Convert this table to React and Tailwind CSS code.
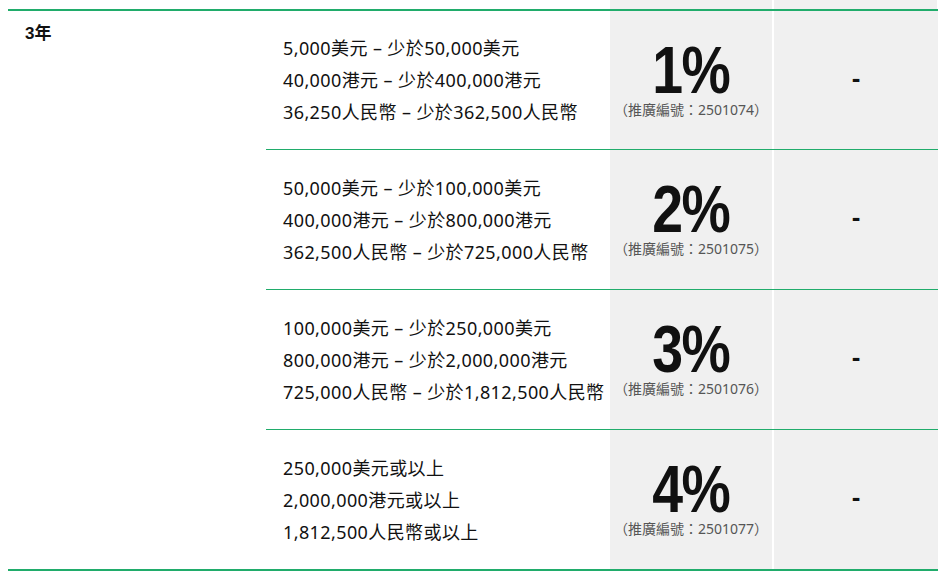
const ROWS = [
  {
    lines: ['5,000美元 – 少於50,000美元', '40,000港元 – 少於400,000港元', '36,250人民幣 – 少於362,500人民幣'],
    rate: '1%',
    code: '2501074',
    h: 'h-[139px]',
  },
  {
    lines: ['50,000美元 – 少於100,000美元', '400,000港元 – 少於800,000港元', '362,500人民幣 – 少於725,000人民幣'],
    rate: '2%',
    code: '2501075',
    h: 'h-[140px]',
  },
  {
    lines: ['100,000美元 – 少於250,000美元', '800,000港元 – 少於2,000,000港元', '725,000人民幣 – 少於1,812,500人民幣'],
    rate: '3%',
    code: '2501076',
    h: 'h-[140px]',
  },
  {
    lines: ['250,000美元或以上', '2,000,000港元或以上', '1,812,500人民幣或以上'],
    rate: '4%',
    code: '2501077',
    h: 'h-[139px]',
  },
];

const FONT = "font-['Noto_Sans','Noto_Sans_CJK_TC',sans-serif]";

export default function App() {
  return (
    <div className={`w-[946px] h-[576px] bg-white px-2 text-[#111] ${FONT}`}>
      {/* tail of the previous row */}
      <div className="flex h-[9px]">
        <div className="w-[602px]" />
        <div className="w-[162px] bg-[#f0f0f0]" />
        <div className="w-[2px]" />
        <div className="w-[163px] bg-[#f0f0f0]" />
      </div>

      <div className="flex w-[930px] border-y-2 border-[#20ac6b]">
        <div className="w-[258px] shrink-0 pl-[17px] pt-[11px] text-[17px] font-bold leading-6 font-['Liberation_Sans','Noto_Sans_CJK_TC',sans-serif]">
          3年
        </div>
        <div className="flex flex-1 flex-col">
          {ROWS.map((r, i) => (
            <div
              key={r.code}
              className={`flex ${r.h} ${i < ROWS.length - 1 ? 'border-b border-[#20ac6b]' : ''}`}
            >
              <div className="flex w-[344px] flex-col justify-center pl-[17px] text-[18px] leading-8 tracking-[0.4px]">
                {r.lines.map((l) => (
                  <p key={l}>{l}</p>
                ))}
              </div>
              <div className="flex w-[162px] flex-col items-center justify-center bg-[#f0f0f0] pb-[3px]">
                <span className="scale-x-[0.84] text-[66px] font-bold leading-[60px] tracking-[-2px] font-['Liberation_Sans',sans-serif]">
                  {r.rate}
                </span>
                <span className="mt-[2px] text-[14px] leading-4 text-[#555]">（推廣編號：{r.code}）</span>
              </div>
              <div className="w-[2px]" />
              <div className="flex w-[164px] items-center justify-center bg-[#f0f0f0] pb-[4px] text-[26px] font-bold font-['Liberation_Sans',sans-serif]">
                -
              </div>
            </div>
          ))}
        </div>
      </div>
    </div>
  );
}
